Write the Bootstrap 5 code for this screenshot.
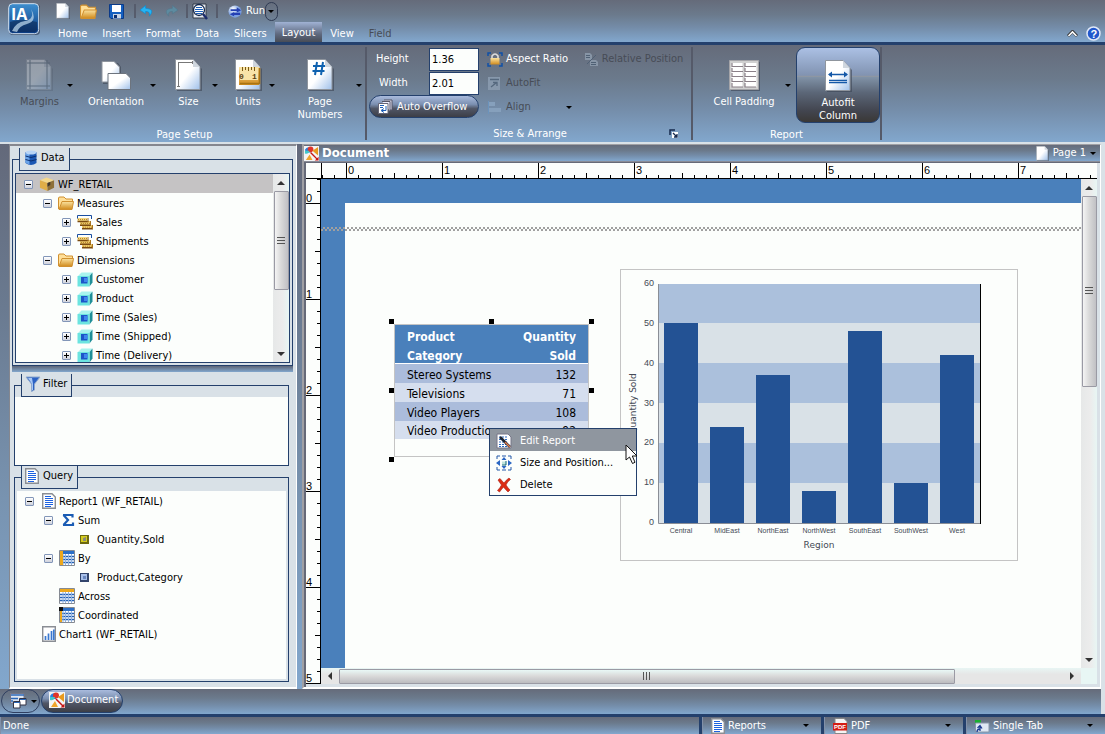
<!DOCTYPE html>
<html lang="en">
<head>
<meta charset="utf-8">
<meta name="viewport" content="width=device-width, initial-scale=1">
<title>InfoAssist - Document</title>
<link href="https://cdn.jsdelivr.net/npm/bootstrap@5.3.0/dist/css/bootstrap.min.css" rel="stylesheet">
<style>
:root{--navy:#24406c;--pane:#d9e1e7;--paper:#fcfefc;--blue:#4a80bb;--steel:linear-gradient(#656b7a 0%,#6b7a8c 35%,#748ca8 65%,#82a7cd 100%);--pill:linear-gradient(#a9bbdd 0%,#7b8fb0 40%,#505666 60%,#3c3e46 100%)}
body{font:11px/14px "DejaVu Sans Condensed","DejaVu Sans",sans-serif;color:#000;background:var(--pane);min-height:100vh;overflow:hidden}
button{border:0;background:none;padding:0;font:inherit;color:inherit}
svg{display:block;flex:none}
a{color:inherit;text-decoration:none}
.topbar{background:var(--steel);color:#fff;height:45px;border-bottom:3px solid var(--navy)}
.logo-box{width:56px;padding-left:8px}
.quick{height:22px}
.quick .edge{margin-left:10px}
.vsep{width:2px;height:14px;background:#565c6c}
.run-arrow{width:13px;height:19px;border:1px solid #2f3a52;border-radius:7px;display:flex;align-items:center;justify-content:center}
.arr{width:0;height:0;border:3px solid transparent;border-top-color:#000;border-bottom:0}
.menu-tabs{margin-left:-5px;gap:1px}
.menu-tabs a{display:block;height:20px;line-height:24px;padding:0 7px}
.menu-tabs .on{background:linear-gradient(#a0b2d4,#5f6a80 60%,#484c56);line-height:22px}
.off{color:#474c56}
.ribbon{background:var(--steel);color:#fff;height:97px}
.group{border-right:2px solid #555a69;margin:2px 0;height:93px}
.group-name{height:14px;line-height:16px;margin-bottom:-1px}
.big{padding-top:12px;display:flex;flex-direction:column;align-items:center;line-height:13px;text-align:center;white-space:nowrap}
.big svg{margin-bottom:4px;height:32px}
.big-arrow{width:8px;height:76px;display:flex;align-items:center;justify-content:center}
.w40{width:40px}.w45{width:45px}.w53{width:53px}.w66{width:66px}.w70{width:70px}.w72{width:72px}.w84{width:84px}
.setup{width:367px}.setup .tools{padding-left:13px;gap:9px}
.arrange{width:326px}
.rep{width:189px}
.sizes{width:112px}
.sizes label{width:62px;padding-left:9px}
.sizes input{width:50px;height:23px;border:1px solid var(--navy);background:var(--paper);padding:0 2px;border-radius:0;font:inherit;color:#000}
.pill{height:23px;border:1px solid var(--navy);border-radius:12px;background:var(--pill);color:#fff;display:flex;align-items:center}
.overflow-pill{width:110px;margin-left:2px}
.line24{height:24px;display:flex;align-items:center;gap:3px;white-space:nowrap}
.align-arrow{margin-left:32px;padding:0}
.fit{border:1px solid var(--navy);border-radius:9px;background:linear-gradient(#abc0e4 0%,#8193b1 37%,#9a9a9c 38%,#8193a8 39%,#5c6778 60%,#42454f 85%,#3a3836 100%);height:76px}
.workarea{padding-top:2px;display:grid;grid-template-columns:9px 288px 5px minmax(0,1fr) 4px;flex:1 1 auto;min-height:547px}
.rail{background:linear-gradient(#63697a,#6a7a90 30%,#7893b0 65%,#82a7cd)}
.side{background:var(--pane);border:2px solid #85878f;border-width:2px 1px 0 1px;border-bottom:2px solid #fff;border-right-color:#fff;padding:2px 3px 5px 2px}
fieldset{border:1px solid var(--navy)}
legend{float:none;width:auto;font-size:11px;line-height:14px;height:23px;padding:0 4px 2px 3px;margin:0 0 0 6px;border:1px solid var(--navy);border-top:0;display:flex;align-items:center;gap:2px;background:var(--pane)}
.fs-data{padding:2px}
.fs-data legend{margin-left:4px}
.fs-side{margin:0 4px 0 2px}
.treebox{border:1px solid var(--navy);background:var(--paper);height:190px;overflow:hidden}
.tree,.tree ul{list-style:none;margin:0;padding:0}
.tree ul{padding-left:19px}
.tree .root-kids{padding-left:27px}
.node{height:19px;display:flex;align-items:center;white-space:nowrap;line-height:15px;padding-top:1px}
.node.sel{background:#c5c3c4}
.exp{width:9px;height:9px;border:1px solid #8296b8;border-radius:1px;background:linear-gradient(#000,#000) 1px 3px/5px 1px no-repeat,linear-gradient(#fff,#cfd2dc);flex:none}
.exp.plus{background:linear-gradient(#000,#000) 1px 3px/5px 1px no-repeat,linear-gradient(#000,#000) 3px 1px/1px 5px no-repeat,linear-gradient(#fff,#cfd2dc)}
.ico{width:25px;flex:none;display:flex;align-items:center;justify-content:flex-end;padding-right:3px}
.noexp{padding-left:9px}
.sb{background:linear-gradient(90deg,#e6e8e8,#ececec 60%,#e8f6f4);width:16px;display:flex;flex-direction:column;align-items:center;flex:none}
.sb-h{background:linear-gradient(#e8f6f4,#e6e6e6 40%);width:auto;height:16px;flex-direction:row}
.sb-btn{width:18px;height:17px;display:flex;align-items:center;justify-content:center;flex:none}
.thumb{width:15px;border:1px solid #9a9aa4;border-radius:1px;background:linear-gradient(90deg,#f4f4f4,#dadada 45%,#c0c0c4);display:flex;align-items:center;justify-content:center}
.sb-h .thumb{width:auto;height:15px;background:linear-gradient(#e9f8f6,#dadada 45%,#bcbcc0)}
.split{height:6px;background:linear-gradient(#5d6577,#82a7cd);margin:0 0 2px}
.filterbox{height:68px;background:var(--paper)}
.querybox{background:var(--paper);margin:2px;padding-left:8px}
.doc{background:#666a78;border:1px solid #a0a0a4;border-left:2px solid #a0a0a4;border-bottom:2px solid #fff;border-right-color:#fff;display:flex;flex-direction:column}
.doc-title{height:17px;background:var(--steel);color:#fff;display:flex;align-items:center;gap:3px;border-bottom:1px solid #8a8c96}
.doc-title h1{font-size:13px;line-height:16px;font-weight:700;margin:0}
.surface{flex:1;display:grid;grid-template-columns:15px minmax(0,1fr) 16px;grid-template-rows:16px minmax(0,1fr) 16px;margin:1px 0 0 2px;border:solid var(--pane);border-width:0 3px 3px 0;background:var(--paper);font-family:"Liberation Sans",sans-serif}
.hruler{grid-column:2/4;display:flex;border-left:1px solid #000;border-bottom:1px solid #000;overflow:hidden}
.hruler span{flex:none;width:96px;padding-left:2px;line-height:14px;background:linear-gradient(#000,#000) 0 0/1px 100% no-repeat,linear-gradient(#000,#000) 48px 100%/1px 5px no-repeat,repeating-linear-gradient(90deg,#000 0 1px,transparent 1px 12px) 0 100%/100% 3px no-repeat}
.hruler .lead-in{width:24px;background:repeating-linear-gradient(90deg,#000 0 1px,transparent 1px 12px) 0 100%/100% 3px no-repeat}
.corner{border-bottom:1px solid #000}
.vruler{grid-row:2/4;border-right:1px solid #000;overflow:hidden;min-height:0}
.vruler span{height:96px;display:flex;align-items:flex-end;line-height:11px;background:linear-gradient(#000,#000) 0 100%/100% 1px no-repeat,linear-gradient(#000,#000) 100% 47px/5px 1px no-repeat,repeating-linear-gradient(0deg,#000 0 1px,transparent 1px 12px) 100% 100%/3px 100% no-repeat}
.vruler .zero{height:25px;background:linear-gradient(#000,#000) 0 100%/100% 1px no-repeat,repeating-linear-gradient(0deg,#000 0 1px,transparent 1px 12px) 100% 100%/3px 100% no-repeat}
.canvas{position:relative;background:var(--blue);overflow:hidden;padding:24px 0 0 24px;display:flex;font-family:"DejaVu Sans Condensed","DejaVu Sans",sans-serif}
.sheet{background:var(--paper);flex:1}
.margin-line{position:absolute;left:0;right:0;top:48px;height:4px;background:repeating-conic-gradient(#a0a0a0 0 25%,transparent 0 50%) 0 0/4px 4px}
.obj-table{position:absolute;left:73px;top:145px;width:195px;height:133px;border:1px solid #c4c4c4;background:var(--paper)}
.grid-data{width:100%;font-size:12px;line-height:15px;border-collapse:collapse}
.grid-data th{background:var(--blue);color:#fff;height:38px;line-height:19px;padding:3px 12px 0;border-bottom:1px solid #fff;vertical-align:top}
.grid-data th div{height:34px}
.grid-data td{height:19px;line-height:16px;padding:3px 12px 0;background:#d5deee}
.grid-data tr:nth-child(odd) td{background:#abbcdb}
.grid-data tr:last-child td{height:18px;line-height:15px}
.hd{position:absolute;width:5px;height:5px;background:#000}
.obj-chart{position:absolute;left:299px;top:90px;width:398px;height:292px;border:1px solid #c4c4c4;background:var(--paper)}
.ctx{position:absolute;left:168px;top:249px;width:148px;border:1px solid var(--navy);background:var(--paper)}
.ctx button{display:flex;width:100%;height:22px;align-items:center;gap:8px;padding:2px 0 0 6px;text-align:left}
.ctx .hot{background:#8f969f;color:#fff}
.cursor{position:absolute;left:304px;top:265px}
.tabbar{height:25px;background:var(--steel);margin-right:4px;gap:1px;padding-left:1px}
.menu-pill{width:39px;height:24px;border:1px solid #2f3f60;border-radius:12px;display:flex;align-items:center;justify-content:center;gap:4px;padding-left:5px}
.doc-pill{width:82px;height:24px;padding:0 7px 2px;gap:2px}
.status{background:var(--navy);color:#fff;padding-top:3px;height:20px;gap:3px}
.status>*{background:var(--steel);height:17px;border-left:1px solid #8190a8;display:flex;align-items:center}
.status .said{padding-left:2px}
.status .drop{gap:3px;padding:0 12px 0 8px}
.s1{width:119px}.s2{width:139px}.s3{width:139px}
</style>
</head>
<body class="d-flex flex-column">
<svg width="0" height="0" class="position-absolute" aria-hidden="true">
<defs>
<linearGradient id="gDoc" x1="0" y1="0" x2="1" y2="1"><stop offset=".5" stop-color="#fff"/><stop offset="1" stop-color="#9fc0ea"/></linearGradient>
<linearGradient id="gGold" x1="0" y1="0" x2="0" y2="1"><stop offset="0" stop-color="#fbe3a0"/><stop offset="1" stop-color="#d08a1c"/></linearGradient>
<linearGradient id="gBlue" x1="0" y1="0" x2="0" y2="1"><stop offset="0" stop-color="#3d8fd0"/><stop offset="1" stop-color="#0c3a80"/></linearGradient>
<radialGradient id="gBall" cx=".35" cy=".3"><stop offset="0" stop-color="#fff"/><stop offset="1" stop-color="#7ba0e0"/></radialGradient>
<symbol id="page" viewBox="0 0 27 32"><path d="M2 2H19L27 10V32H2Z" fill="#3c4454" opacity=".6"/><path d="M.5.5H18L25 8V30.500H.5Z" fill="url(#gDoc)" stroke="#8f959d"/><path d="M18 .5V8H25Z" fill="#cfd6de"/></symbol>
<symbol id="folder" viewBox="0 0 16 14"><path d="M.5 13V2Q.5 1 2 1H6L8 3H14.500V6" fill="#ffdf98" stroke="#d09030"/><path d="M1 13.500L4 5.500H15.500L14 13.500Z" fill="url(#gGold)" stroke="#d09030"/></symbol>
<symbol id="lines" viewBox="0 0 14 16"><path d="M.7.7H10L13.300 4V15.300H.7Z" fill="#fff" stroke="#8a8e94" stroke-width="1.400"/><path d="M3 3.500H9M3 5.500H11M3 7.500H11M3 9.500H11M3 11.500H11M3 13.500H9" stroke="#1d62e0" stroke-width="1.200"/></symbol>
<symbol id="cube" viewBox="0 0 16 15"><path d="M1 4L4.500.5H15.500L12.500 4Z" fill="#a8f4ee"/><path d="M12.500 4L15.500.5V10.500L12.500 14.500Z" fill="#1f8f98"/><path d="M.5 4H12.500V14.500H.5Z" fill="#6ce4e0"/><path d="M4 5H10.500V11.500H4Z" fill="#1d55c8"/><path d="M7 6H10.500V10H7Z" fill="#3f86ee"/></symbol>
<symbol id="meas" viewBox="0 0 16 15"><path d="M.5 4V.5H14.500V4" fill="none" stroke="#1a4fa0"/><path d="M.5 3H10V6H.5Z" fill="#f4d880"/><path d="M3 6H13V10H3Z" fill="#ecc868"/><path d="M5 10H15V13H5Z" fill="#ecc868"/><path d="M.5 6.500H11.500M3 10.300H14M5 13.800H16" stroke="#7a4a10" stroke-width="1.400"/><path d="M11 3V7M13.500 6V10.500M15.500 10V14" stroke="#a87420"/><path d="M1 4.500H10M4 8.500H13M6 12.200H15" stroke="#b8862c" stroke-dasharray="1 1"/></symbol>
<symbol id="tbl" viewBox="0 0 16 16"><path d="M.5.5H15.500V15.500H.5Z" fill="#fff" stroke="#858a92"/><path d="M1 1H15V4H1Z" fill="#2b6fc8"/><path d="M1 6.500H15M1 9.500H15M1 12.500H15" stroke="#2361b6" stroke-width="1.400"/><path d="M6.500 4V15M9.500 4V15M12.500 4V15M4 4V15" stroke="#8fb2e0"/></symbol>
<symbol id="docico" viewBox="0 0 16 16"><path d="M0 0H16V16H0Z" fill="#f4f4f4"/><path d="M1 4Q3 0 7 2V7H2Z" fill="#2a7fe0"/><circle cx="7" cy="3.500" r="3" fill="#e0342a"/><path d="M1 5H6Q5 9 1 8Z" fill="#42c8c8"/><path d="M9 5L15 1V10Z" fill="#e89a20"/><path d="M2 15L6 9L9 15Z" fill="#efa42c"/><path d="M7 7L14 14" stroke="#c41414" stroke-width="1.500"/><path d="M15.500 15.500V11.500L11.500 15.500Z" fill="#c41414"/></symbol>
</defs>
</svg>

<header class="topbar d-flex">
  <div class="logo-box"><svg width="33" height="36" viewBox="0 0 33 36"><rect x="1" y="4" width="31" height="31" rx="4" fill="#222f48" opacity=".6"/><rect x=".7" y="3.700" width="30" height="30" rx="4" fill="url(#gBlue)" stroke="#d4e2f0"/><path d="M2 22Q14 18 29 22V30Q28 32 26 32H5Q2 32 2 29Z" fill="#0a2148" opacity=".5"/><path d="M4 31Q8 22 17 21Q27 19 23 9Q30 21 19 24Q11 26 9 32Z" fill="#b9d4ea" opacity=".75"/><text x="3" y="20" font-family="Open Sans,sans-serif" font-weight="700" font-size="16" fill="#fff">IA</text></svg></div>
  <div class="flex-grow-1">
    <div class="quick d-flex align-items-center">
      <button aria-label="New"><svg width="14" height="16"><use href="#page" width="14" height="16"/></svg></button>
      <button aria-label="Open" class="edge"><svg width="17" height="15"><use href="#folder" width="17" height="15"/></svg></button>
      <button aria-label="Save" class="ms-2 ps-1"><svg width="15" height="15" viewBox="0 0 15 15"><path d="M.5.5H14.500V14.500H2L.5 13Z" fill="#1560c0" stroke="#0b3a88"/><path d="M3 1H12V8H3Z" fill="#fff"/><path d="M4 10H12V14.500H4Z" fill="#c8d4e4"/><path d="M5 11H8V14H5Z" fill="#0b2f70"/></svg></button>
      <span class="vsep edge"></span>
      <button aria-label="Undo" class="ms-1"><svg width="14" height="12" viewBox="0 0 15 12"><path d="M6 0L0 5L6 9V6.500Q11 6 10 11.500Q17 4 6 3Z" fill="#25b4f4" stroke="#0e8ad0" stroke-width=".7"/></svg></button>
      <button aria-label="Redo" class="edge" disabled><svg width="14" height="12" viewBox="0 0 15 12"><path d="M9 0L15 5L9 9V6.500Q4 6 5 11.500Q-2 4 9 3Z" fill="#5d8ba0" stroke="#55788c" stroke-width=".7"/></svg></button>
      <span class="vsep ms-2"></span>
      <button aria-label="Preview" class="ms-1"><svg width="16" height="17" viewBox="0 0 16 17"><path d="M1 1H14V15H1Z" fill="#e8ecf2" stroke="#333a48"/><circle cx="7" cy="7" r="5.500" fill="#fff" stroke="#14284c" stroke-width="1.300"/><path d="M4 4.500H10M3 6.500H11M3 8.500H11M4 10.500H10" stroke="#1d5fb8"/><path d="M11 11L15 16" stroke="#1c2c6c" stroke-width="2.400"/></svg></button>
      <span class="vsep ms-2"></span>
      <button class="d-flex align-items-center edge gap-1"><svg width="14" height="15" viewBox="0 0 16 15"><ellipse cx="8" cy="7.500" rx="7.500" ry="7" fill="url(#gBall)"/><path d="M3 5H10V2.500L15 6L10 8.500V7H3ZM14 9H7V8L2 10.500L7 13V11.500H14Z" fill="#2440b4"/></svg>Run</button>
      <button class="run-arrow" aria-label="Run options"><span class="arr"></span></button>
    </div>
    <nav class="menu-tabs d-flex">
      <a href="#">Home</a><a href="#">Insert</a><a href="#">Format</a><a href="#">Data</a><a href="#">Slicers</a><a href="#" class="on">Layout</a><a href="#">View</a><a href="#" class="off">Field</a>
    </nav>
  </div>
  <div class="d-flex align-items-end gap-2 pe-1">
    <button aria-label="Collapse ribbon" class="pb-1"><svg width="11" height="8" viewBox="0 0 11 8"><path d="M1 6L5.500 1.500L10 6" fill="none" stroke="#333" stroke-width="3"/><path d="M1.500 6L5.500 2L9.500 6" fill="none" stroke="#fff" stroke-width="1.600"/></svg></button>
    <button aria-label="Help"><svg width="15" height="16" viewBox="0 0 15 16"><circle cx="7.500" cy="7.500" r="6.500" fill="#2258cc" stroke="#dfe8f8" stroke-width="1.500"/><text x="4.500" y="11.500" font-size="11" font-weight="700" fill="#fff" font-family="Liberation Sans,sans-serif">?</text></svg></button>
  </div>
</header>

<section class="ribbon d-flex">
  <div class="group setup d-flex flex-column justify-content-between">
    <div class="tools d-flex">
      <div class="d-flex"><button class="big w53 off" disabled><svg width="27" height="32" opacity=".3" viewBox="0 0 27 32"><use href="#page" width="27" height="32"/><path d="M1 4H24M1 27H24M4 1V30M21 1V30" stroke="#345"/></svg>Margins</button><button class="big-arrow" aria-label="Margins options"><span class="arr"></span></button></div>
      <div class="d-flex"><button class="big w66"><svg width="31" height="32" viewBox="0 0 31 32"><path d="M2 4H17L20 8V25H2Z" fill="#3c4454" opacity=".6"/><path d="M1 2.500H13L18.500 8V23H1Z" fill="url(#gDoc)" stroke="#8f959d"/><path d="M7 14.500H25L29.500 19V30.500H7Z" fill="url(#gDoc)" stroke="#6d747e"/></svg>Orientation</button><button class="big-arrow" aria-label="Orientation options"><span class="arr"></span></button></div>
      <div class="d-flex"><button class="big w45"><svg width="27" height="32" viewBox="0 0 27 32"><use href="#page" width="27" height="32"/><path d="M3.500 3V28M2 27.500H5M3 3.500H18M17.500 2V5" stroke="#777" fill="none"/></svg>Size</button><button class="big-arrow" aria-label="Size options"><span class="arr"></span></button></div>
      <div class="d-flex"><button class="big w40"><svg width="27" height="32" viewBox="0 0 27 32"><use href="#page" width="27" height="32"/><path d="M4 8H24V26H4Z" fill="url(#gGold)"/><path d="M5 24.500H24.500V9" stroke="#a87414" stroke-width="1.600" fill="none"/><path d="M5 9H23V21H5Z" fill="#f8e4a8"/><path d="M7.500 8V12M10.500 8V11M13.500 8V12M16.500 8V11M19.500 8V12" stroke="#7a5a14"/><text x="4" y="20" font-size="8" font-weight="700" fill="#5a4010" font-family="Liberation Mono,monospace">0</text><text x="17" y="20" font-size="8" font-weight="700" fill="#5a4010" font-family="Liberation Mono,monospace">1</text></svg>Units</button><button class="big-arrow" aria-label="Units options"><span class="arr"></span></button></div>
      <div class="d-flex"><button class="big w70"><svg width="27" height="32" viewBox="0 0 27 32"><use href="#page" width="27" height="32"/><path d="M10 3L8 16M16 3L14 16M6 7H18M5.500 12H17.500" stroke="#0f62b0" stroke-width="2"/></svg>Page<br>Numbers</button><button class="big-arrow" aria-label="Page number options"><span class="arr"></span></button></div>
    </div>
    <div class="group-name text-center ps-1">Page Setup</div>
  </div>
  <div class="group arrange d-flex flex-column justify-content-between">
    <div class="d-flex">
      <div class="sizes">
        <div class="line24 gap-0"><label for="h">Height</label><input id="h" value="1.36"></div>
        <div class="line24 gap-0"><label for="w" class="ps-2 ms-1">Width</label><input id="w" value="2.01"></div>
        <button class="pill overflow-pill gap-1 ps-2"><svg width="15" height="15" viewBox="0 0 15 15"><path d="M6 1H14V11H12" fill="#dde" stroke="#556"/><path d="M4 2.500H12V12" fill="#eef" stroke="#556"/><path d="M.5 4.500H10V14.500H.5Z" fill="#fff" stroke="#667"/><path d="M2 6.500H6M2 8.500H5M8 7V11.500H4M6 9.500L3 11.500L6 13.500" stroke="#1d5fb8" fill="none"/></svg>Auto Overflow</button>
      </div>
      <div class="ps-2">
        <button class="line24"><svg width="16" height="15" viewBox="0 0 16 15"><path d="M1 4V1H4M12 1H15V4M15 11V14H12M4 14H1V11" fill="none" stroke="#0f50a8" stroke-width="1.500"/><path d="M5 6V4Q8 0 11 4V6" fill="none" stroke="#ddd" stroke-width="1.600"/><path d="M3.500 6H12.500V12.500H3.500Z" fill="url(#gGold)"/></svg>Aspect Ratio</button>
        <button class="line24 off" disabled><svg width="16" height="15" viewBox="0 0 16 15"><path d="M1 1H13V14H1Z" fill="#8798ac"/><path d="M3 3.500H12M4 11L9 7M6 6.500H10V10" stroke="#55687e" fill="none" stroke-width="1.300"/></svg>AutoFit</button>
        <button class="line24 off" disabled><svg width="16" height="15" viewBox="0 0 16 15"><path d="M1.500 1V14" stroke="#6b93bc"/><path d="M2 2H8V6H2ZM2 8H14V12H2Z" fill="#86a0bc"/></svg>Align<span class="arr align-arrow"></span></button>
      </div>
      <div class="ms-2 ps-1"><button class="line24 off" disabled><svg width="15" height="15" viewBox="0 0 15 15"><path d="M1 1H6L8 3V8H1ZM6 8H12L14 10V14H6Z" fill="#8795a6"/><path d="M2 3.500H6M2 5.500H6M7 10.500H12M7 12.500H12M3 12L12 3" stroke="#4f6074"/></svg>Relative Position</button></div>
    </div>
    <div class="group-name d-flex align-items-center"><span class="flex-grow-1 text-center ps-4">Size &amp; Arrange</span><button aria-label="Size and arrange settings" class="me-2 pe-1"><svg width="10" height="10" viewBox="0 0 10 10"><path d="M1 6V1H6" stroke="#14284c" fill="none" stroke-width="1.500"/><path d="M3 3H9V9H3Z" fill="#fff"/><path d="M4 4L8 8M8 5V8H5" stroke="#14284c" stroke-width="1.300" fill="none"/></svg></button></div>
  </div>
  <div class="group rep d-flex flex-column justify-content-between">
    <div class="d-flex justify-content-end">
      <button class="big w72"><svg width="31" height="32" viewBox="0 0 31 32"><path d="M2 3H31V32H2Z" fill="#3c4454" opacity=".6"/><path d="M.5 1.500H29.500V30.500H.5Z" fill="#d0d0d0" stroke="#a4a4a8"/><path d="M2.500 4H13.500V28H2.500ZM16 4H27.500V28H16Z" fill="#fff"/><path d="M3 4V7.500H14M3 9V12.500H14M3 14V17.500H14M3 19V22.500H14M3 24V28H14M16 4V7.500H27M16 9V12.500H27M16 14V17.500H27M16 19V22.500H27M16 24V28H27" fill="none" stroke="#8a8088" stroke-width="1.200"/></svg>Cell Padding</button><button class="big-arrow ms-1 me-1" aria-label="Cell padding options"><span class="arr"></span></button>
      <button class="big w84 fit"><svg width="27" height="32" viewBox="0 0 27 32"><use href="#page" width="27" height="32"/><path d="M4 14.500H22M4 20.500H22M4 22.700H22" stroke="#1458a8" stroke-width="1.300"/><path d="M3 14.500L7 11.500V17.500ZM23 14.500L19 11.500V17.500Z" fill="#1458a8"/></svg>Autofit<br>Column</button>
    </div>
    <div class="group-name text-center">Report</div>
  </div>
</section>

<main class="workarea">
  <div class="rail"></div>
  <aside class="side d-flex flex-column">
    <fieldset class="fs-data"><legend><svg width="16" height="16" viewBox="0 0 15 16"><path d="M2 2V13Q7.500 17 13 13V2Z" fill="#1c58b4"/><path d="M2 3V12.500Q4 14 6 14.500V4Z" fill="#6aa4ea"/><ellipse cx="7.500" cy="2.500" rx="5.500" ry="2" fill="#b8d4f6"/><path d="M2 6Q7.500 9 13 6M2 9.500Q7.500 12.500 13 9.500" stroke="#0c2f70" fill="none"/></svg>Data</legend>
      <div class="treebox d-flex">
        <ul class="tree flex-grow-1">
          <li><div class="node sel ps-2"><button class="exp" aria-label="Collapse"></button><span class="ico"><svg width="16" height="16" viewBox="0 0 17 16"><path d="M1 4L8 1L16 4L9 7Z" fill="#f4d88c"/><path d="M1 4L9 7V15.500L1 12Z" fill="#e0ae48"/><path d="M9 7L16 4V12L9 15.500Z" fill="#8e7038"/><path d="M9 7L12 6V9L9 11Z" fill="#40362c"/></svg></span>WF_RETAIL</div>
            <ul class="root-kids">
              <li><div class="node"><button class="exp" aria-label="Collapse"></button><span class="ico"><svg width="16" height="14"><use href="#folder" width="16" height="14"/></svg></span>Measures</div>
                <ul><li class="node"><button class="exp plus" aria-label="Expand"></button><span class="ico"><svg width="16" height="15"><use href="#meas"/></svg></span>Sales</li><li class="node"><button class="exp plus" aria-label="Expand"></button><span class="ico"><svg width="16" height="15"><use href="#meas"/></svg></span>Shipments</li></ul></li>
              <li><div class="node"><button class="exp" aria-label="Collapse"></button><span class="ico"><svg width="16" height="14"><use href="#folder" width="16" height="14"/></svg></span>Dimensions</div>
                <ul><li class="node"><button class="exp plus" aria-label="Expand"></button><span class="ico"><svg width="16" height="15"><use href="#cube"/></svg></span>Customer</li><li class="node"><button class="exp plus" aria-label="Expand"></button><span class="ico"><svg width="16" height="15"><use href="#cube"/></svg></span>Product</li><li class="node"><button class="exp plus" aria-label="Expand"></button><span class="ico"><svg width="16" height="15"><use href="#cube"/></svg></span>Time (Sales)</li><li class="node"><button class="exp plus" aria-label="Expand"></button><span class="ico"><svg width="16" height="15"><use href="#cube"/></svg></span>Time (Shipped)</li><li class="node"><button class="exp plus" aria-label="Expand"></button><span class="ico"><svg width="16" height="15"><use href="#cube"/></svg></span>Time (Delivery)</li></ul></li>
            </ul></li>
        </ul>
        <div class="sb"><div class="sb-btn"><svg width="8" height="4"><path d="M0 4L4 0L8 4Z" fill="#333"/></svg></div><div class="thumb" style="height:99px"><svg width="8" height="8"><path d="M0 .5H8M0 3.500H8M0 6.500H8" stroke="#555"/></svg></div><div class="sb-btn mt-auto"><svg width="8" height="4"><path d="M0 0L4 4L8 0Z" fill="#333"/></svg></div></div>
      </div>
    </fieldset>
    <div class="split"></div>
    <fieldset class="fs-side"><legend><svg width="16" height="16" viewBox="0 0 16 16"><path d="M1 1H15L9.500 8V14L6.500 15.500V8Z" fill="#2c62c4" stroke="#8ea8cc"/><path d="M3 2H7L8 8V14L7 14V8Z" fill="#a8c8f4"/></svg>Filter</legend><div class="filterbox"></div></fieldset>
    <fieldset class="fs-side flex-grow-1 d-flex flex-column"><legend class="gap-1"><svg width="14" height="16"><use href="#lines"/></svg>Query</legend>
      <div class="querybox flex-grow-1">
        <ul class="tree">
          <li><div class="node"><button class="exp" aria-label="Collapse"></button><span class="ico"><svg width="14" height="16"><use href="#lines"/></svg></span>Report1 (WF_RETAIL)</div>
            <ul>
              <li><div class="node"><button class="exp" aria-label="Collapse"></button><span class="ico"><svg width="14" height="14" viewBox="0 0 14 14"><path d="M2 2H11.500V4.500M2.500 2L7 7L2.500 12M2 12H12V9.500" fill="none" stroke="#1a5cb4" stroke-width="2.200"/></svg></span>Sum</div>
                <ul><li class="node noexp"><span class="ico pe-2"><svg width="9" height="9" viewBox="0 0 9 9"><path d="M0 0H9V9H0Z" fill="#6c6810"/><path d="M1 1H7V7H1Z" fill="#d4cc1c"/><path d="M3 3L6 2V6H3Z" fill="#887"/></svg></span>Quantity,Sold</li></ul></li>
              <li><div class="node"><button class="exp" aria-label="Collapse"></button><span class="ico"><svg width="16" height="16" viewBox="0 0 16 16"><use href="#tbl"/><path d="M1 1H4V15H1Z" fill="#eda81c"/></svg></span>By</div>
                <ul><li class="node noexp"><span class="ico pe-2"><svg width="9" height="9" viewBox="0 0 9 9"><path d="M0 0H9V9H0Z" fill="#33456c"/><path d="M1 1H7V7H1Z" fill="#a8c0ea"/><path d="M3 3H6V6H3Z" fill="#6a88c0"/></svg></span>Product,Category</li></ul></li>
              <li class="node noexp"><span class="ico"><svg width="16" height="16" viewBox="0 0 16 16"><use href="#tbl"/><path d="M1 1H15V4H1Z" fill="#eda81c"/></svg></span>Across</li>
              <li class="node noexp"><span class="ico"><svg width="16" height="16" viewBox="0 0 16 16"><use href="#tbl"/><path d="M1 4H3V15H1Z" fill="#eda81c"/><path d="M0 0H4V4H0Z" fill="#111"/></svg></span>Coordinated</li>
            </ul></li>
          <li class="node noexp"><span class="ico"><svg width="14" height="16" viewBox="0 0 14 16"><path d="M.7.7H13.300V15.300H.7Z" fill="#fff" stroke="#8a8e94" stroke-width="1.400"/><path d="M3.500 14V10M6.500 14V7.500M9.500 14V5M11.800 14V3.500" stroke="#3a78d0" stroke-width="1.700"/></svg></span>Chart1 (WF_RETAIL)</li>
        </ul>
      </div>
    </fieldset>
  </aside>
  <div class="rail"></div>
  <section class="doc">
    <div class="doc-title"><svg width="15" height="15"><use href="#docico"/></svg><h1>Document</h1><button class="ms-auto d-flex align-items-center gap-1"><svg width="13" height="15"><use href="#page"/></svg>Page 1<span class="arr me-1"></span></button></div>
    <div class="surface">
      <div class="corner"></div>
      <div class="hruler"><span class="lead-in"></span><span>0</span><span>1</span><span>2</span><span>3</span><span>4</span><span>5</span><span>6</span><span>7</span></div>
      <div class="vruler"><span class="zero">0</span><span>1</span><span>2</span><span>3</span><span>4</span><span>5</span></div>
      <div class="canvas">
        <div class="sheet"></div>
        <div class="margin-line"></div>
        <div class="obj-table">
          <table class="grid-data">
            <thead><tr><th><div>Product<br>Category</div></th><th class="text-end"><div>Quantity<br>Sold</div></th></tr></thead>
            <tbody><tr><td>Stereo Systems</td><td class="text-end">132</td></tr><tr><td>Televisions</td><td class="text-end">71</td></tr><tr><td>Video Players</td><td class="text-end">108</td></tr><tr><td>Video Production</td><td class="text-end">92</td></tr></tbody>
          </table>
        </div>
        <i class="hd" style="left:68px;top:140px"></i><i class="hd" style="left:168px;top:140px"></i><i class="hd" style="left:268px;top:140px"></i>
        <i class="hd" style="left:68px;top:209px"></i><i class="hd" style="left:268px;top:209px"></i><i class="hd" style="left:68px;top:278px"></i>
        <div class="obj-chart">
          <svg width="396" height="290" viewBox="0 0 396 290" font-family="Liberation Sans,sans-serif" fill="#444a55">
            <path d="M38 14H360V253H38Z" fill="#d9e1e7"/>
            <path d="M38 14H360V53H38ZM38 93H360V133H38ZM38 173H360V213H38Z" fill="#abc0dc"/>
            <path d="M43 53H77V253H43ZM89 157H123V253H89ZM135 105H169V253H135ZM181 221H215V253H181ZM227 61H261V253H227ZM273 213H307V253H273ZM319 85H353V253H319Z" fill="#235294"/>
            <path d="M37.500 14V253.500H360" fill="none" stroke="#8a8e96"/><path d="M359.500 14V254" stroke="#000"/>
            <g font-size="9" text-anchor="end"><text x="33" y="16">60</text><text x="33" y="56">50</text><text x="33" y="96">40</text><text x="33" y="136">30</text><text x="33" y="175">20</text><text x="33" y="215">10</text><text x="33" y="255">0</text></g>
            <g font-size="7" text-anchor="middle"><text x="60" y="263">Central</text><text x="106" y="263">MidEast</text><text x="152" y="263">NorthEast</text><text x="198" y="263">NorthWest</text><text x="244" y="263">SouthEast</text><text x="290" y="263">SouthWest</text><text x="336" y="263">West</text></g>
            <g font-size="9" text-anchor="middle" font-family="DejaVu Sans,sans-serif"><text x="198" y="278">Region</text><text transform="translate(15 134) rotate(-90)">Quantity Sold</text></g>
          </svg>
        </div>
        <div class="ctx">
          <button class="hot"><svg width="16" height="16" viewBox="0 0 16 16"><path d="M1 1H12L15 4V15H1Z" fill="#fff" stroke="#778"/><path d="M3 4H11M3 6.500H12M3 9H12M3 11.500H12M3 13.500H12" stroke="#2a68c0" stroke-dasharray="2 1"/><path d="M4 4L14 14" stroke="#1c2430" stroke-width="2.600"/><path d="M9 9L14 14" stroke="#e07a4c" stroke-width="1.500"/></svg>Edit Report</button>
          <button><svg width="16" height="16" viewBox="0 0 16 16"><path d="M1 4V1H4M6 1H10M12 1H15V4M15 12V15H12M10 15H6M4 15H1V12" fill="none" stroke="#2458a8"/><path d="M8 2L10.500 5H5.500ZM8 14L10.500 11H5.500ZM0 8L4 5V11ZM16 8L12 5V11Z" fill="#2a66c4"/><path d="M6 6.500H10V9.500H6Z" fill="#bfe4dc"/><path d="M10 6V10H6" fill="none" stroke="#167"/></svg>Size and Position...</button>
          <button><svg width="16" height="16" viewBox="0 0 16 16"><path d="M2 3L4 1.500Q7 5 8 6Q10 3 13 1L14.500 2.500Q11 5 10 8Q12 11 14 13L12 15Q9 12 7.500 10Q5 13 3.500 15L1.500 13.500Q4 11 5.500 8Q4 6 2 3Z" fill="#dc2c14" stroke="#a81c10" stroke-width=".6"/></svg>Delete</button>
        </div>
        <svg class="cursor" width="14" height="21" viewBox="0 0 14 21"><path d="M1 1V16L4.500 13L7.500 19.500L10 18.300L7.300 12H12Z" fill="#fff" stroke="#111"/></svg>
      </div>
      <div class="sb"><div class="sb-btn"><svg width="8" height="4"><path d="M0 4L4 0L8 4Z" fill="#333"/></svg></div><div class="thumb" style="height:39%"><svg width="8" height="8"><path d="M0 .5H8M0 3.500H8M0 6.500H8" stroke="#555"/></svg></div><div class="sb-btn mt-auto"><svg width="8" height="4"><path d="M0 0L4 4L8 0Z" fill="#333"/></svg></div></div>
      <div class="sb sb-h"><div class="sb-btn"><svg width="4" height="8"><path d="M4 0L0 4L4 8Z" fill="#333"/></svg></div><div class="thumb" style="width:81%"><svg width="8" height="8"><path d="M.5 0V8M3.500 0V8M6.500 0V8" stroke="#555"/></svg></div><div class="sb-btn ms-auto"><svg width="4" height="8"><path d="M0 0L4 4L0 8Z" fill="#333"/></svg></div></div>
      <div style="background:#e8f6f4"></div>
    </div>
  </section>
</main>

<div class="tabbar d-flex">
  <button class="menu-pill" aria-label="Windows"><svg width="17" height="16" viewBox="0 0 17 16"><path d="M.5.5H14V10H.5Z" fill="#dfe6f0" stroke="#778"/><path d="M1 2H14M1 5.500H8M1 8H3" stroke="#2c68b8" stroke-width="1.500"/><path d="M9.500 5.500H16V12H9.500Z" fill="#fff" stroke="#334"/><path d="M3.500 8.500H10V15H3.500Z" fill="#fff" stroke="#334"/><path d="M4 9.500H10M10 6.500H16" stroke="#2c68b8"/></svg><span class="arr"></span></button>
  <button class="pill doc-pill"><svg width="16" height="16"><use href="#docico"/></svg>Document</button>
</div>
<footer class="status d-flex">
  <div class="flex-grow-1 said">Done</div>
  <button class="drop s1"><svg width="14" height="16"><use href="#lines"/></svg>Reports<span class="arr ms-auto"></span></button>
  <button class="drop s2"><svg width="15" height="16" viewBox="0 0 15 16"><path d="M2 .5H11L14 3.500V15.500H2Z" fill="#f4f4f4" stroke="#888"/><path d="M0 5H14V12.500H0Z" fill="#d41c14"/><text x="1" y="11" font-size="6" font-weight="700" fill="#fff" font-family="Liberation Sans,sans-serif">PDF</text></svg>PDF<span class="arr ms-auto"></span></button>
  <button class="drop s3"><svg width="15" height="15" viewBox="0 0 15 15"><path d="M0 2H6V5H0Z" fill="#18b030"/><path d="M.5 5H14V14H.5Z" fill="#dfe8f4" stroke="#8896a8"/><path d="M2 14Q2 11 5 11M2.500 10L5 7.500L7 10.500M5 8V13" stroke="#1c3c90" stroke-width="1.300" fill="none"/></svg>Single Tab<span class="arr ms-auto"></span></button>
</footer>
<script src="https://cdn.jsdelivr.net/npm/bootstrap@5.3.0/dist/js/bootstrap.bundle.min.js"></script>
</body>
</html>
